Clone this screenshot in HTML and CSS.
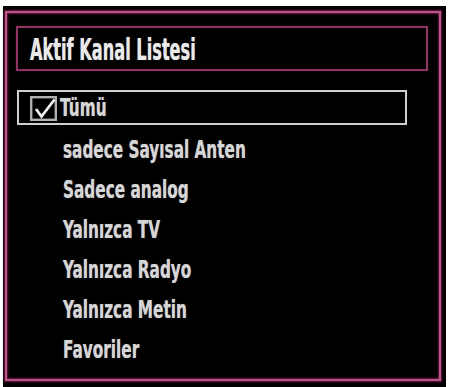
FILE: index.html
```html
<!DOCTYPE html>
<html>
<head>
<meta charset="utf-8">
<link rel="stylesheet" href="styles.css">
</head>
<body>
<div class="screen">
  <div class="frame">
    <div class="title"><span class="title-text">Aktif Kanal Listesi</span></div>
    <ul class="list">
      <li class="item sel">
        <svg class="cb" width="27" height="25" viewBox="0 0 27 25">
          <rect x="1.2" y="1.2" width="24.6" height="22.6" fill="none" stroke="#b0b0b0" stroke-width="2.4"/>
          <path d="M6 13 L11.5 20.5 L24.5 3.5" fill="none" stroke="#f0f0f0" stroke-width="2.8" stroke-linejoin="miter"/>
        </svg>
        <span class="label">Tümü</span>
      </li>
      <li class="item"><span class="label">sadece Sayısal Anten</span></li>
      <li class="item"><span class="label">Sadece analog</span></li>
      <li class="item"><span class="label">Yalnızca TV</span></li>
      <li class="item"><span class="label">Yalnızca Radyo</span></li>
      <li class="item"><span class="label">Yalnızca Metin</span></li>
      <li class="item"><span class="label">Favoriler</span></li>
    </ul>
  </div>
</div>
</body>
</html>
```
FILE: styles.css
```css
html, body {
  margin: 0;
  padding: 0;
  background: #ffffff;
}
body {
  width: 450px;
  height: 387px;
  overflow: hidden;
  font-family: "Liberation Sans Narrow", "DejaVu Sans Condensed", "Liberation Sans", sans-serif;
  font-weight: bold;
  color: #d6d6d6;
}
.screen {
  margin: 6px 0 0 3px;
  width: 443px;
  height: 381px;
  background: #000;
  padding: 5px 0 0 2px;
  box-sizing: border-box;
}
.frame {
  width: 436px;
  height: 370px;
  box-sizing: border-box;
  border: 2px solid #b8558a;
  box-shadow: 0 0 2px 1px #6a1840, inset 0 0 2px 1px #6a1840;
  padding: 13px 0 0 9px;
}
.title {
  width: 412px;
  height: 45px;
  box-sizing: border-box;
  border: 2px solid #8e3563;
  box-shadow: 0 0 1px #5a1535;
  display: flex;
  align-items: center;
  padding: 2px 0 0 12px;
}
.title-text {
  display: inline-block;
  font-size: 30px;
  line-height: 30px;
  color: #eaeaea;
  transform: scaleX(0.6);
  transform-origin: left center;
  white-space: nowrap;
  text-shadow: 0 0 1px #999;
}
.list {
  list-style: none;
  margin: 19px 0 0 0;
  padding: 0;
}
.item {
  height: 40px;
  display: flex;
  align-items: center;
  padding: 3px 0 0 47px;
  box-sizing: border-box;
}
.item.sel {
  width: 390px;
  height: 35px;
  margin: 2px 0 3px 1px;
  border: 2px solid #d0d0d0;
  padding: 1px 0 0 11px;
}
.cb {
  display: block;
  margin-right: 3px;
  flex: none;
}
.label {
  display: inline-block;
  font-size: 25px;
  line-height: 26px;
  transform: scaleX(0.68);
  transform-origin: left center;
  white-space: nowrap;
  text-shadow: 0 0 1px #888;
}
```
